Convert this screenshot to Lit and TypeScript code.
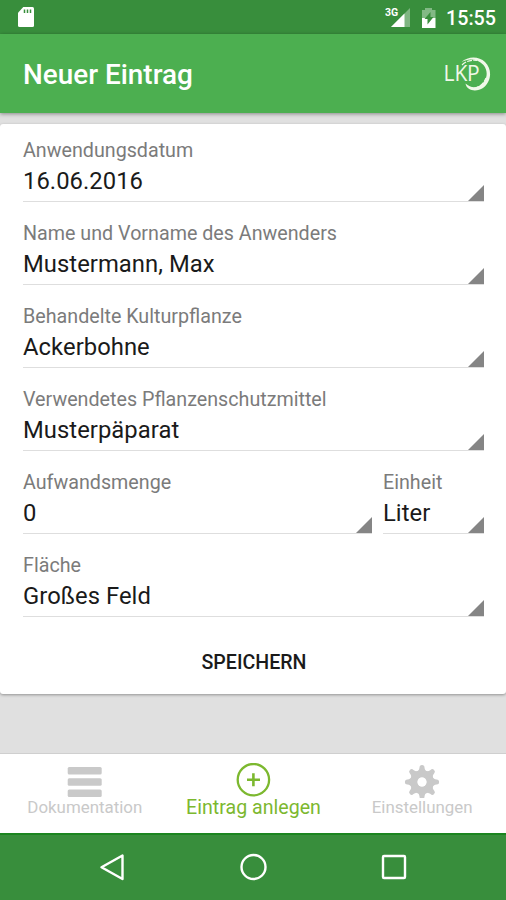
import { LitElement, html, css, svg } from "lit";
import { customElement, property } from "lit/decorators.js";

@customElement("form-field")
class FormField extends LitElement {
  @property() label = "";
  @property() value = "";

  static styles = css`
    :host { display: block; height: 66px; position: relative; }
    .box { height: 66px; border-bottom: 1.5px solid #dedede; box-sizing: border-box; padding-top: 1px; }
    .label { font-size: 19.7px; line-height: 28px; color: #7b7b7b; white-space: nowrap; }
    .value { font-size: 23.8px; line-height: 32px; color: #1a1a1a; letter-spacing: 0.05px; white-space: nowrap; }
    .corner { position: absolute; right: 0; bottom: 1px; width: 16px; height: 16px; display: block; }
  `;

  render() {
    return html`
      <div class="box">
        <div class="label">${this.label}</div>
        <div class="value">${this.value}</div>
      </div>
      <svg class="corner" viewBox="0 0 16 16"><path d="M16 0V16H0Z" fill="#858585" /></svg>
    `;
  }
}

@customElement("app-root")
class AppRoot extends LitElement {
  static styles = css`
    :host {
      display: flex; flex-direction: column; width: 506px; height: 900px; overflow: hidden;
      background: #e0e0e0; font-family: Roboto, "Liberation Sans", sans-serif;
    }
    svg { display: block; }
    .status { height: 34px; background: #388e3c; display: flex; align-items: center; flex: none; }
    .sd { margin-left: 17px; }
    .signals { margin-left: auto; margin-top: 1px; display: flex; }
    .net { font-size: 10.5px; font-weight: 700; fill: #fff; }
    .time { color: #fff; font-size: 19.7px; font-weight: 500; line-height: 34px; width: 50px; margin: 3px 10px 0 10px; white-space: nowrap; }
    .bar {
      height: 79px; flex: none; background: #4caf50; display: flex; align-items: center;
      justify-content: space-between; padding: 0 14px 0 23px; box-shadow: 0 1px 4px rgba(0,0,0,.4);
    }
    .title { color: #fff; font-size: 27.9px; font-weight: 500; line-height: 34px; margin-top: 3px; white-space: nowrap; }
    .mark { font-family: "Open Sans", sans-serif; font-size: 21px; font-weight: 500; fill: #f1f8e9; }
    .card {
      margin-top: 11px; height: 570px; box-sizing: border-box; flex: none; background: #fff; border-radius: 3px;
      padding: 12px 22px 0 23px; display: flex; flex-direction: column; gap: 17px;
      box-shadow: 0 1px 3px rgba(0,0,0,.35);
    }
    .split { display: grid; grid-template-columns: 349px 1fr; gap: 11px; }
    .save { font-size: 19.6px; font-weight: 500; line-height: 28px; margin-top: 15px; color: #1a1a1a; text-align: center; padding-left: 1px; }
    .tabs {
      margin-top: auto; height: 80px; flex: none; box-sizing: border-box; background: #fff;
      border-top: 1px solid #cfcfcf; display: grid; grid-template-columns: repeat(3, 1fr);
    }
    .tab { display: flex; flex-direction: column; align-items: center; color: #c9c9c9; font-size: 16.9px; white-space: nowrap; }
    .tab svg { margin-top: 9px; }
    .tab span { line-height: 22px; margin-top: -2px; padding-left: 1px; }
    .tab.active { color: #7cb82f; font-size: 19.6px; }
    .tab.active span { margin-top: -1px; }
    .nav { height: 67px; flex: none; background: #388e3c; display: flex; justify-content: center; align-items: center; gap: 105px; border-top: 2px solid #1b8520; box-sizing: border-box; padding: 0 0 2px 0; }
  `;

  private gear() {
    const teeth = [0, 45, 90, 135, 180, 225, 270, 315];
    return svg`${teeth.map((a) => svg`<path d="M-6 -9.500C-3.500 -11 -2.700 -12.500 -2.500 -14.600A2.500 2.500 0 0 1 2.500 -14.600C2.700 -12.500 3.500 -11 6 -9.500Z" transform=${`rotate(${a})`} />`)}`;
  }

  render() {
    return html`
      <div class="status">
        <svg class="sd" width="18" height="22" viewBox="0 0 18 22">
          <path d="M6.3 1H15.5A1.5 1.5 0 0 1 17 2.500V19.500A1.500 1.500 0 0 1 15.500 21H2.500A1.500 1.500 0 0 1 1 19.500V6.800Z" fill="#fff" />
          <path d="M7.500 3.500V7M10.500 3.500V7M13.500 3.500V7" stroke="#388e3c" stroke-width="1.500" />
        </svg>
        <div class="signals">
          <svg width="27" height="24" viewBox="0 0 27 24">
            <path d="M25 2V21H6Z" fill="#7fb682" />
            <path d="M19.500 7.500V21H6Z" fill="#fff" />
            <text class="net" x="0" y="10" stroke="#388e3c" stroke-width="2" paint-order="stroke">3G</text>
          </svg>
          <svg width="24" height="24" viewBox="0 0 24 24">
            <path d="M13 2H20V4H23.500V12H10V4H13Z" fill="#82b985" />
            <path d="M10 12H23.500V22H10Z" fill="#fff" />
            <path d="M18.500 6L12.500 13H15.500V18.500L21.500 11H18.500Z" fill="#388e3c" />
          </svg>
        </div>
        <div class="time">15:55</div>
      </div>
      <div class="bar">
        <div class="title">Neuer Eintrag</div>
        <svg width="48" height="40" viewBox="0 0 48 40">
          <path d="M17.500 8C24 2 35 2 41 8C49 16 47 28 39 34C33 38 23 37.500 21.500 29.500C26 33.500 31 34.500 36 31.500C43 27 45 18 39.500 11C33 4.500 25 4 17.500 8Z" fill="#f1f8e9" />
          <path d="M18 11C22 7 28 5.500 33 6.500M24 33C31 36.500 39 32 42 24" fill="none" stroke="#f1f8e9" stroke-width="1.200" stroke-dasharray="5 1.200" />
          <text class="mark" x="-.5" y="27" stroke="#4caf50" stroke-width="1.500" paint-order="stroke"><tspan>L</tspan><tspan x="10.500">K</tspan><tspan x="23">P</tspan></text>
        </svg>
      </div>
      <div class="card">
        <form-field label="Anwendungsdatum" value="16.06.2016"></form-field>
        <form-field label="Name und Vorname des Anwenders" value="Mustermann, Max"></form-field>
        <form-field label="Behandelte Kulturpflanze" value="Ackerbohne"></form-field>
        <form-field label="Verwendetes Pflanzenschutzmittel" value="Musterpäparat"></form-field>
        <div class="split">
          <form-field label="Aufwandsmenge" value="0"></form-field>
          <form-field label="Einheit" value="Liter"></form-field>
        </div>
        <form-field label="Fläche" value="Großes Feld"></form-field>
        <div class="save">SPEICHERN</div>
      </div>
      <div class="tabs">
        <div class="tab">
          <svg width="36" height="35" viewBox="0 0 36 35">
            <g fill="#c9c9c9"><rect x="1.700" y="4" width="34" height="7.500" rx="1.500" /><rect x="1.700" y="15.300" width="34" height="7.500" rx="1.500" /><rect x="1.700" y="26.600" width="34" height="7.500" rx="1.500" /></g>
          </svg>
          <span>Dokumentation</span>
        </div>
        <div class="tab active">
          <svg width="36" height="35" viewBox="0 0 36 35">
            <g fill="none" stroke="#7cb82f" stroke-width="2.300"><circle cx="18.400" cy="16.700" r="15.700" /><path d="M12 16.700H25M18.400 10.200V23.200" stroke-width="2.600" /></g>
          </svg>
          <span>Eintrag anlegen</span>
        </div>
        <div class="tab">
          <svg width="36" height="35" viewBox="-18 -19 36 35">
            <g fill="#c9c9c9">${this.gear()}<circle r="8.200" fill="none" stroke="#c9c9c9" stroke-width="7.500" /></g>
            <circle r="4.500" fill="#fff" />
          </svg>
          <span>Einstellungen</span>
        </div>
      </div>
      <div class="nav">
        <svg width="36" height="36" viewBox="0 0 36 36"><path d="M28.500 6.500V30L7.500 18.250Z" fill="none" stroke="#fff" stroke-width="2.400" stroke-linejoin="round" /></svg>
        <svg width="36" height="36" viewBox="0 0 36 36"><circle cx="18.500" cy="18" r="12" fill="none" stroke="#fff" stroke-width="2.400" /></svg>
        <svg width="36" height="36" viewBox="0 0 36 36"><rect x="7" y="7" width="22" height="22" rx="1" fill="none" stroke="#fff" stroke-width="2.400" /></svg>
      </div>
    `;
  }
}
